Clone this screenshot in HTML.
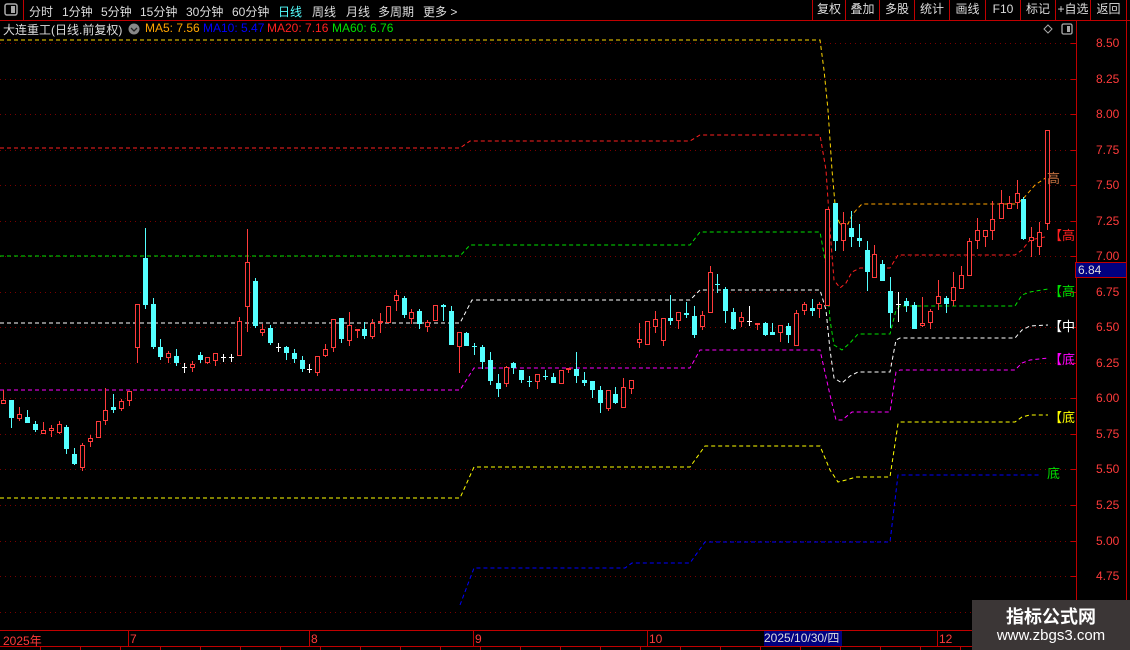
<!DOCTYPE html>
<html><head><meta charset="utf-8"><style>
*{margin:0;padding:0;box-sizing:border-box}
body{width:1130px;height:650px;background:#000;overflow:hidden;position:relative;font-family:"Liberation Sans","Noto Sans CJK SC",sans-serif;color:#ddd}
.a{position:absolute;white-space:nowrap}
.m{font-size:12px;color:#ddd;top:3px}
.btn{position:absolute;top:0;height:20px;border-left:1px solid #c00000;font-size:12px;color:#ddd;text-align:center;line-height:19px}
.pl{position:absolute;left:1096px;font-size:12px;color:#ff3b3b}
.tl{position:absolute;top:632px;font-size:12px;color:#ff3b3b}
</style></head><body>
<svg class="a" style="left:0;top:0" width="1130" height="650" id="s">
<line x1="0" y1="20.5" x2="1130" y2="20.5" stroke="#c00000"/>
<line x1="23.5" y1="0" x2="23.5" y2="20" stroke="#c00000"/>
<rect x="5" y="4" width="12" height="11" rx="2" fill="none" stroke="#aaa" stroke-width="1.5"/><rect x="11" y="6" width="4" height="7" fill="#aaa"/>
<line x1="1076.5" y1="20" x2="1076.5" y2="630" stroke="#c00000"/>
<line x1="1126.5" y1="20" x2="1126.5" y2="630" stroke="#c00000"/>
<line x1="0" y1="630.5" x2="1130" y2="630.5" stroke="#c00000"/>
<line x1="0" y1="646.5" x2="1130" y2="646.5" stroke="#c00000"/>
<circle cx="134" cy="29" r="5.5" fill="#888"/><path d="M131 28l3 3 3-3" stroke="#222" fill="none" stroke-width="1.3"/>
<path d="M1048 25l4 4-4 4-4-4z" fill="none" stroke="#aaa"/>
<rect x="1062" y="24" width="10" height="10" rx="1.5" fill="none" stroke="#aaa" stroke-width="1.3"/><rect x="1067" y="26" width="3" height="6" fill="#aaa"/>
<g id="g"></g>
</svg>
<div class="a m" style="left:29px">分时</div>
<div class="a m" style="left:62px">1分钟</div>
<div class="a m" style="left:101px">5分钟</div>
<div class="a m" style="left:140px">15分钟</div>
<div class="a m" style="left:186px">30分钟</div>
<div class="a m" style="left:232px">60分钟</div>
<div class="a m" style="left:278px;color:#54ffff">日线</div>
<div class="a m" style="left:312px">周线</div>
<div class="a m" style="left:346px">月线</div>
<div class="a m" style="left:378px">多周期</div>
<div class="a m" style="left:423px">更多 &gt;</div>
<div class="btn" style="left:812px;width:33px">复权</div>
<div class="btn" style="left:845px;width:34px">叠加</div>
<div class="btn" style="left:879px;width:35px">多股</div>
<div class="btn" style="left:914px;width:35px">统计</div>
<div class="btn" style="left:949px;width:36px">画线</div>
<div class="btn" style="left:985px;width:35px">F10</div>
<div class="btn" style="left:1020px;width:35px">标记</div>
<div class="btn" style="left:1055px;width:35px">+自选</div>
<div class="btn" style="left:1090px;width:37px;border-right:1px solid #c00000">返回</div>
<div class="a" style="left:3px;top:21px;font-size:12px;color:#ddd">大连重工(日线.前复权)</div>
<div class="a" style="left:145px;top:21px;font-size:12px;color:#ffa500">MA5: 7.56</div>
<div class="a" style="left:203px;top:21px;font-size:12px;color:#0000ff">MA10: 5.47</div>
<div class="a" style="left:267px;top:21px;font-size:12px;color:#ff2020">MA20: 7.16</div>
<div class="a" style="left:332px;top:21px;font-size:12px;color:#00e000">MA60: 6.76</div>
<div class="pl" style="top:36px">8.50</div><div class="pl" style="top:72px">8.25</div>
<div class="pl" style="top:107px">8.00</div><div class="pl" style="top:143px">7.75</div>
<div class="pl" style="top:178px">7.50</div><div class="pl" style="top:214px">7.25</div>
<div class="pl" style="top:249px">7.00</div><div class="pl" style="top:285px">6.75</div>
<div class="pl" style="top:320px">6.50</div><div class="pl" style="top:356px">6.25</div>
<div class="pl" style="top:391px">6.00</div><div class="pl" style="top:427px">5.75</div>
<div class="pl" style="top:462px">5.50</div><div class="pl" style="top:498px">5.25</div>
<div class="pl" style="top:534px">5.00</div><div class="pl" style="top:569px">4.75</div>
<div class="a" style="left:1075px;top:262px;width:52px;height:16px;background:#000080;border:1px solid #c00000;color:#ddd;font-size:12px;padding-left:2px;line-height:14px">6.84</div>
<div style="position:absolute;left:0;top:20px;width:1075px;height:610px;overflow:hidden">
<div class="a" style="left:1047px;top:148px;font-size:13px;color:#c07040">高</div>
<div class="a" style="left:1049px;top:205px;font-size:13px;color:#ff2020">【高1</div>
<div class="a" style="left:1049px;top:261px;font-size:13px;color:#00e000">【高2</div>
<div class="a" style="left:1049px;top:296px;font-size:13px;color:#fff">【中】</div>
<div class="a" style="left:1049px;top:329px;font-size:13px;color:#ff00ff">【底2</div>
<div class="a" style="left:1049px;top:387px;font-size:13px;color:#ffff00">【底1</div>
<div class="a" style="left:1047px;top:443px;font-size:13px;color:#00e000">底</div>
</div>
<div class="tl" style="left:3px">2025年</div>
<div class="tl" style="left:130px">7</div>
<div class="tl" style="left:311px">8</div>
<div class="tl" style="left:475px">9</div>
<div class="tl" style="left:649px">10</div>
<div class="a" style="left:764px;top:631px;width:78px;height:15px;background:#000080;color:#ddd;font-size:12px;line-height:15px">2025/10/30/四</div>
<div class="tl" style="left:939px">12</div>
<div class="a" style="left:972px;top:600px;width:158px;height:50px;background:#3b3636"></div>
<div class="a" style="left:972px;top:603px;width:158px;text-align:center;font-size:18px;font-weight:bold;color:#fff">指标公式网</div>
<div class="a" style="left:972px;top:627px;width:158px;text-align:center;font-size:15px;color:#fff">www.zbgs3.com</div>
<script>
var g=document.getElementById('g'),h='';
var ys=[43,79,114,150,185,221,256,292,327,363,398,434,469,505,541,576,612];
ys.forEach(function(y){h+='<line x1="0" y1="'+(y+.5)+'" x2="1076" y2="'+(y+.5)+'" stroke="#7a0000" stroke-dasharray="1,4"/>';h+='<line x1="1071" y1="'+(y+.5)+'" x2="1076" y2="'+(y+.5)+'" stroke="#c00000"/>';});
[128,309,473,647,764,937].forEach(function(x){h+='<line x1="'+(x+.5)+'" y1="630" x2="'+(x+.5)+'" y2="646" stroke="#c00000"/>';});
for(var x=40;x<1130;x+=40)h+='<line x1="'+(x+.5)+'" y1="646" x2="'+(x+.5)+'" y2="650" stroke="#c00000"/>';
function pl(p,c){h+='<polyline points="'+p+'" fill="none" stroke="'+c+'" stroke-width="1" stroke-dasharray="4,3"/>';}
pl('0,40 820,40 824,70 828,110 832,170 836,215 840,224','#ffd700');
pl('840,224 848,224 852,215 858,208 862,204 1015,204 1022,200 1035,185 1050,175','#ffa500');
pl('0,148 460,148 470,141 690,141 700,135 820,135 826,170 830,230 834,280 840,288 846,283 852,272 860,268 890,268 898,255 1015,255 1022,250 1030,240 1045,237','#ff2020');
pl('0,256 460,256 470,245 690,245 700,232 820,232 826,265 830,320 834,345 842,350 850,343 858,334 890,334 896,310 900,306 1015,306 1022,295 1030,292 1048,289','#00e000');
pl('0,323 460,323 472,300 690,300 700,290 820,290 826,310 830,350 834,378 842,383 850,376 858,372 890,372 896,340 900,338 1015,338 1022,330 1030,326 1048,325','#ffffff');
pl('0,390 460,390 474,368 690,368 700,350 820,350 830,395 836,420 842,420 852,412 890,412 896,372 900,370 1015,370 1022,363 1030,360 1048,358','#ff00ff');
pl('0,498 460,498 474,467 690,467 705,446 820,446 830,470 838,482 846,480 856,477 890,477 898,424 900,422 1015,422 1022,417 1030,415 1048,415','#ffff00');
pl('460,605 474,568 625,568 632,563 690,563 705,542 890,542 898,475 1040,475','#0000ff');
var d=[
[3,400,404,390,404,'r'],[11,400,418,400,428,'c'],[19,414,419,407,421,'r'],[27,417,423,410,423,'c'],[35,424,430,421,432,'c'],[43,430,434,422,434,'r'],[51,428,431,425,437,'r'],[59,424,433,421,434,'r'],[66,427,449,425,454,'c'],[74,454,464,448,465,'c'],[82,445,468,443,471,'r'],[90,438,442,435,447,'r'],[98,421,438,421,438,'r'],[105,410,421,388,425,'r'],[113,407,410,394,413,'c'],[121,401,409,399,411,'r'],[129,391,401,391,406,'r'],
[137,304,348,304,363,'r'],[145,258,305,228,309,'c'],[153,304,347,298,349,'c'],[160,347,357,339,360,'c'],[168,353,358,351,363,'r'],[176,356,363,349,366,'c'],[184,367,367,363,373,'w'],[192,364,368,361,372,'r'],[200,355,360,352,363,'c'],[207,357,363,357,364,'r'],[215,353,361,353,366,'r'],[223,357,357,354,362,'w'],[231,357,357,354,362,'w'],[239,321,356,317,356,'r'],[247,262,307,229,332,'r'],[255,281,326,278,328,'c'],[262,329,333,324,336,'r'],[270,328,343,325,345,'c'],[278,347,347,343,352,'w'],[286,347,353,346,360,'c'],[294,353,359,349,363,'c'],[302,360,369,356,372,'c'],[309,369,369,364,373,'w'],[317,356,373,356,376,'r'],[325,349,356,344,357,'r'],[333,319,348,319,352,'r'],
[341,318,339,318,343,'c'],[349,325,341,312,346,'r'],[357,329,331,329,338,'r'],[364,329,336,322,339,'c'],[372,323,337,319,339,'r'],[380,321,323,313,333,'r'],[388,306,323,306,323,'r'],[396,295,301,290,311,'r'],[404,298,315,296,318,'c'],[411,312,319,309,324,'r'],[419,311,324,309,329,'c'],[427,322,327,320,332,'r'],[435,305,321,305,321,'r'],[443,305,307,304,321,'c'],[451,311,345,306,345,'c'],[459,332,347,332,373,'r'],[466,333,346,332,346,'c'],[474,346,346,343,355,'c'],[482,347,362,345,369,'c'],[490,360,381,352,385,'c'],[498,383,389,374,397,'c'],[506,367,384,366,387,'r'],[513,363,368,362,374,'c'],[521,370,380,370,383,'c'],[529,381,382,376,387,'c'],[537,374,382,374,389,'r'],[545,376,376,370,380,'c'],[553,377,383,373,383,'c'],[561,370,384,370,384,'r'],[568,368,370,368,373,'r'],[576,369,376,352,383,'c'],[584,380,383,372,386,'c'],[592,381,390,381,398,'c'],[600,390,403,386,413,'c'],[608,390,409,390,411,'r'],[615,394,403,387,404,'c'],[623,387,408,378,408,'r'],[631,380,389,380,394,'r'],
[639,339,343,323,348,'r'],[647,321,345,321,345,'r'],[655,319,327,311,333,'r'],[663,318,341,318,346,'r'],[670,318,321,295,325,'c'],[678,312,321,312,329,'r'],[686,313,315,302,318,'c'],[694,316,335,306,338,'c'],[702,315,327,311,330,'r'],[710,272,313,266,313,'r'],[717,284,284,274,293,'c'],[725,289,311,287,323,'c'],[733,312,329,308,330,'c'],[741,317,322,312,327,'r'],[749,321,321,306,326,'w'],[757,323,325,323,330,'r'],[765,323,335,322,336,'c'],[772,332,335,323,335,'c'],[780,325,333,325,342,'r'],[788,326,335,323,343,'c'],[796,313,346,310,346,'r'],[804,304,311,302,315,'r'],[812,308,311,299,316,'c'],[819,304,309,302,318,'r'],[827,209,306,209,306,'r'],[835,203,241,203,251,'c'],[843,223,241,212,251,'r'],[851,228,237,211,247,'c'],[859,238,241,224,247,'c'],[867,250,272,241,291,'c'],[874,254,278,245,278,'r'],[882,264,281,260,281,'c'],[890,291,313,277,328,'c'],[898,304,304,292,322,'w'],[906,301,306,298,312,'c'],[914,305,329,302,329,'c'],[922,323,326,297,327,'r'],[930,311,323,309,329,'r'],[938,296,304,280,310,'r'],[946,298,304,296,313,'c'],[953,287,301,272,306,'r'],[961,275,289,266,289,'r'],[969,241,276,238,276,'r'],[977,230,241,218,249,'r'],[985,230,237,230,247,'r'],[992,219,231,201,240,'r'],[1001,203,219,190,219,'r'],[1009,203,209,196,209,'r'],[1017,193,203,180,209,'r'],[1023,199,239,197,240,'c'],[1031,237,241,227,257,'r'],[1039,232,247,222,255,'r'],[1047,130,224,130,230,'r']];
var col={r:'#ff3b3b',c:'#54ffff',w:'#ffffff'};
d.forEach(function(k){var x=k[0],c=col[k[5]];
h+='<line x1="'+(x+.5)+'" y1="'+k[3]+'" x2="'+(x+.5)+'" y2="'+k[4]+'" stroke="'+c+'"/>';
if(k[5]=='w'){h+='<line x1="'+(x-2)+'" y1="'+(k[1]+.5)+'" x2="'+(x+3)+'" y2="'+(k[1]+.5)+'" stroke="#fff"/>';}
else if(k[5]=='c'){h+='<rect x="'+(x-2)+'" y="'+k[1]+'" width="5" height="'+Math.max(1,k[2]-k[1])+'" fill="'+c+'"/>';}
else{h+='<rect x="'+(x-1.5)+'" y="'+(k[1]+.5)+'" width="4" height="'+Math.max(1,k[2]-k[1]-1)+'" fill="#000" stroke="'+c+'"/>';}
});
g.innerHTML=h;
</script>
</body></html>
